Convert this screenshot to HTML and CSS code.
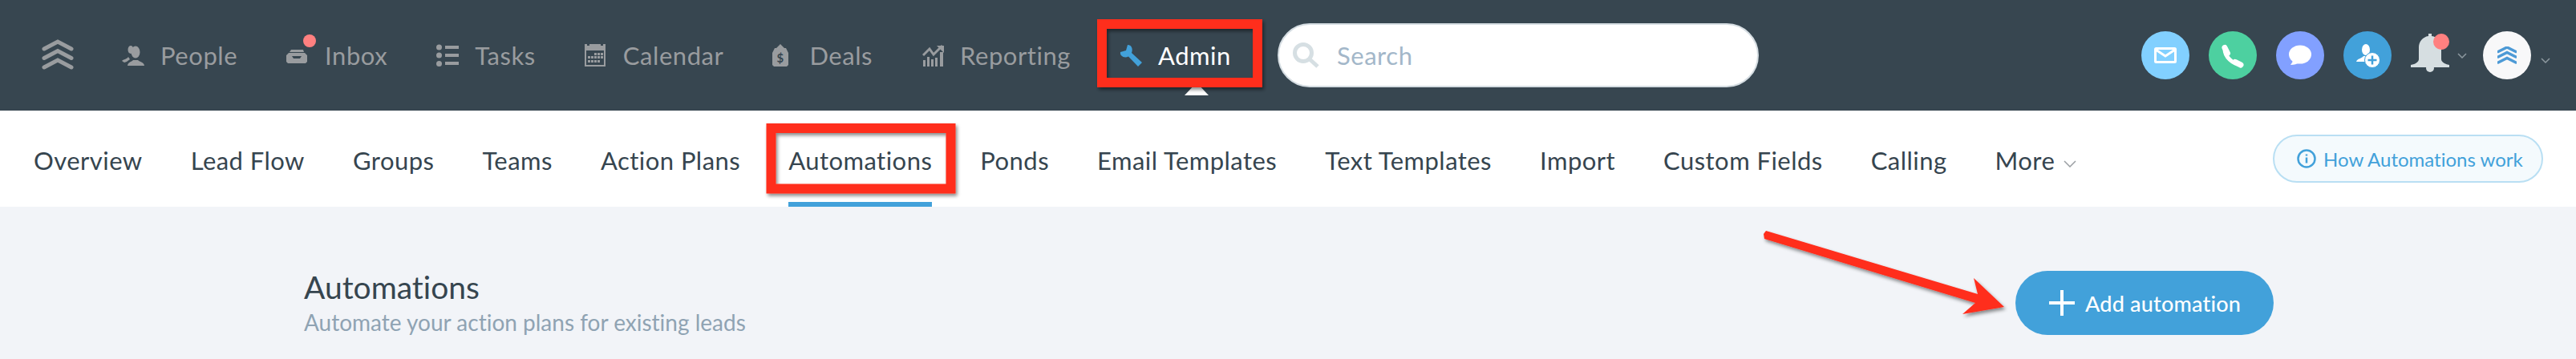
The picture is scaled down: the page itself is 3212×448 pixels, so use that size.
FILE: index.html
```html
<!DOCTYPE html>
<html lang="en">
<head>
<meta charset="utf-8">
<title>Automations</title>
<link rel="stylesheet" href="styles.css">
</head>
<body>
<header class="topbar">
  <svg class="logo" viewBox="0 0 40 38"><g class="logo-lines"><path d="M3 12 20 3 37 12"/><path d="M3 23.500 20 14.500 37 23.500"/><path d="M3 35 20 26 37 35"/></g></svg>
  <nav class="mainnav">
    <a class="navitem"><svg class="ico ico-people" viewBox="0 0 28 25"><ellipse cx="17" cy="8" rx="5.500" ry="7.500"/><ellipse cx="11" cy="5" rx="3.500" ry="5"/><path d="M7 25c0-4 5-5 7-7h6c2 2 8 3 8 7z"/><path d="M0 19c2-2 6-2 8-5l2 3-4 3-3 1z"/></svg><span>People</span></a>
    <a class="navitem"><svg class="ico ico-inbox" viewBox="0 0 26 19"><path d="M0 9 3 6h20l3 3v8l-2 2H2l-2-2zM7 10l2 3h8l2-3z" fill-rule="evenodd"/><path d="M4 5 6 2h15l1 3z M6 1h15" /></svg><i class="dot dot-inbox"></i><span>Inbox</span></a>
    <a class="navitem"><svg class="ico ico-tasks" viewBox="0 0 28 28"><circle cx="3.500" cy="4" r="3.500"/><circle cx="3.500" cy="14" r="3.500"/><circle cx="3.500" cy="24.500" r="3.500"/><path d="M11 2h17v4H11zM11 12h17v4H11zM11 22h17v4H11z"/></svg><span>Tasks</span></a>
    <a class="navitem"><svg class="ico ico-cal" viewBox="0 0 26 28"><path fill-rule="evenodd" d="M0 0h3v2h3V0h14v2h3V0h3v28H0zM2 8v18h22V8z"/><path d="M12 11h3v3h-3zM16 11h3v3h-3zM20 11h3v3h-3zM4 15h3v3H4zM8 15h3v3H8zM12 15h3v3h-3zM16 15h3v3h-3zM20 15h3v3h-3zM4 20h3v3H4zM8 20h3v3H8zM12 20h3v3h-3zM16 20h3v3h-3z"/></svg><span>Calendar</span></a>
    <a class="navitem"><svg class="ico ico-deals" viewBox="0 0 20 28"><path d="M10 0l5 5 2 0 3 6v15l-2 2H2l-2-2V11l3-6h2z"/><text x="10" y="23" class="dollar">$</text></svg><span>Deals</span></a>
    <a class="navitem"><svg class="ico ico-rep" viewBox="0 0 27 28"><path d="M1 20h3v8H1zM6 16h3v12H6zM11 19h3v9h-3zM16 17h3v11h-3zM22 10h4v18h-4z"/><path class="rep-line" d="M1 14 9 6l5 7L25 2"/><path d="M18 2h9v9z"/></svg><span>Reporting</span></a>
    <a class="navitem navitem-active"><svg class="ico ico-wrench" viewBox="0 0 28 28"><path d="M10 1 8 8 1 10C0 15 6 18 11 15.500L23 28 28 23 15 11C17 6 15 1 10 1z"/></svg><span>Admin</span></a>
    <div class="search"><svg class="search-ico" viewBox="0 0 33 32"><circle cx="13" cy="13" r="10.500"/><path d="M20 20 31 30"/></svg><span>Search</span></div>
  </nav>
  <div class="actions">
    <a class="round round-mail"><svg viewBox="0 0 60 60"><rect x="17.500" y="21.500" width="25" height="17" rx="1"/><path d="M18 23 30 31 42 23"/></svg></a>
    <a class="round round-phone"><svg viewBox="0 0 60 60"><path class="ph-arc" d="M20 22C20 32 30 41 39 41"/><path class="ph-end" d="M20 20.500l3.500 7M33 38.500l7 3.500"/></svg></a>
    <a class="round round-chat"><svg viewBox="0 0 60 60"><ellipse cx="30" cy="29" rx="14" ry="11.500"/><path d="M22 36 18 42c5 0 8-1 11-3z"/></svg></a>
    <a class="round round-add"><svg viewBox="0 0 60 60"><ellipse cx="28" cy="23" rx="5" ry="7"/><path d="M16 38c1-4 7-4 9-7h5l3 7z"/><circle cx="36" cy="36" r="9.500" class="plus-bg"/><path class="plus" d="M36 30.500v11M30.500 36h11"/></svg></a>
    <a class="bell"><svg viewBox="0 0 48 48"><path d="M22 0h4v3c7 1 12 7 12 14v15c0 3 4 6 10 7v3H0v-3c6-1 10-4 10-7V17c0-7 5-13 12-14z"/><circle cx="24" cy="43" r="5"/></svg><i class="dot dot-bell"></i></a>
    <svg class="chev chev-bell" viewBox="0 0 12 7"><path d="M1 1 6 6 11 1"/></svg>
    <a class="avatar"><svg viewBox="0 0 24 22"><g class="logo-lines logo-blue"><path d="M1 6.500 12 1l11 5.500"/><path d="M1 13 12 7.500 23 13"/><path d="M1 20 12 14.500 23 20"/></g></svg></a>
    <svg class="chev" viewBox="0 0 12 7"><path d="M1 1 6 6 11 1"/></svg>
  </div>
</header>

<nav class="tabs">
  <a class="tab">Overview</a>
  <a class="tab">Lead Flow</a>
  <a class="tab">Groups</a>
  <a class="tab">Teams</a>
  <a class="tab">Action Plans</a>
  <a class="tab tab-active">Automations</a>
  <a class="tab">Ponds</a>
  <a class="tab">Email Templates</a>
  <a class="tab">Text Templates</a>
  <a class="tab">Import</a>
  <a class="tab">Custom Fields</a>
  <a class="tab">Calling</a>
  <a class="tab tab-more">More<svg class="chev-more" viewBox="0 0 16 9"><path d="M1 1 8 8 15 1"/></svg></a>
  <a class="howto"><svg class="info" viewBox="0 0 26 26"><circle cx="13" cy="13" r="10.500"/><path class="info-i" d="M13 11.500v7M13 7.500v2"/></svg>How Automations work</a>
</nav>

<main class="content">
  <div class="heading">
    <h1>Automations</h1>
    <p>Automate your action plans for existing leads</p>
  </div>
  <button class="addbtn"><svg class="plusicon" viewBox="0 0 32 32"><path d="M16 0v32M0 16h32"/></svg>Add automation</button>
</main>

<svg class="annotations" viewBox="0 0 3212 448">
  <defs><filter id="shade" x="-5%" y="-20%" width="110%" height="140%"><feDropShadow dx="2" dy="3" stdDeviation="2" flood-color="#000" flood-opacity=".45"/></filter></defs>
  <g filter="url(#shade)" class="marks">
    <rect class="mark-box" x="1374" y="30" width="194" height="73"/>
    <rect class="mark-box" x="961.500" y="160" width="224" height="75.500"/>
    <path class="mark-arrow" d="M2202 288 L2199 292 L2200 298 L2463 378 L2447 392 L2499 383 L2461 347 L2466 367 Z"/>
  </g>
</svg>
</body>
</html>
```
FILE: styles.css
```css
* { box-sizing: border-box; }
html, body { margin: 0; padding: 0; }
body {
  position: relative;
  width: 3212px;
  height: 448px;
  overflow: hidden;
  background: #f2f4f8;
  font-family: Lato, "Open Sans", sans-serif;
  font-variant-ligatures: none;
}
a { color: inherit; text-decoration: none; }

/* top bar */
.topbar {
  display: flex;
  align-items: center;
  height: 138px;
  padding-left: 52px;
  background: #374650;
}
.logo { width: 40px; height: 38px; margin-top: -2px; flex: none; }
.logo-lines { fill: none; stroke: #999c9f; stroke-width: 5; stroke-linecap: round; }
.logo-blue { stroke: #4d9ad6; stroke-width: 3.500; }
.mainnav { display: flex; align-items: center; gap: 61px; margin-left: 60px; }
.navitem {
  position: relative;
  display: flex;
  align-items: center;
  gap: 20px;
  font-size: 31px;
  letter-spacing: .55px;
  color: #999c9f;
}
.ico { fill: #999c9f; display: block; flex: none; }
.ico-people { width: 28px; height: 25px; }
.ico-inbox { width: 26px; height: 19px; margin-right: 2px; }
.ico-tasks { width: 28px; height: 28px; }
.ico-cal { width: 26px; height: 28px; margin-right: 2px; }
.ico-deals { width: 20px; height: 28px; margin-right: 6px; }
.ico-rep { width: 27px; height: 28px; margin-left: 1px; }
.ico-wrench { width: 28px; height: 28px; fill: #42a1da; }
.dollar { fill: #374650; font-size: 15px; font-weight: 700; text-anchor: middle; }
.rep-line { fill: none; stroke: #999c9f; stroke-width: 3; }
.navitem-active { color: #fff; }
.navitem-active::after {
  content: "";
  position: absolute;
  left: 81px;
  top: 53px;
  border-left: 15px solid transparent;
  border-right: 15px solid transparent;
  border-bottom: 16px solid #fff;
}
.dot { position: absolute; border-radius: 50%; background: #ff8080; }
.dot-inbox { left: 21px; top: -7px; width: 16px; height: 16px; }

.search {
  display: flex;
  align-items: center;
  gap: 22px;
  width: 600px;
  height: 80px;
  margin-left: -3px;
  padding-left: 17px;
  border: 2px solid #d5dde2;
  border-radius: 40px;
  background: #fff;
  font-size: 31px;
  letter-spacing: .55px;
  color: #a3b7c9;
}
.search-ico { width: 33px; height: 32px; fill: none; stroke: #d6dfe3; stroke-width: 5; }

.actions { display: flex; align-items: center; gap: 24px; margin-left: auto; padding-right: 32px; }
.round { display: block; width: 60px; height: 60px; border-radius: 50%; }
.round svg { display: block; width: 60px; height: 60px; }
.round-mail { background: #82d0ff; }
.round-mail rect, .round-mail path { fill: none; stroke: #fff; stroke-width: 3; }
.round-phone { background: #4dd0a0; }
.ph-arc { fill: none; stroke: #fff; stroke-width: 5; }
.ph-end { fill: none; stroke: #fff; stroke-width: 7; stroke-linecap: round; }
.round-chat { background: #82a0ff; }
.round-chat svg { fill: #fff; }
.round-add { background: #42a1da; }
.round-add svg { fill: #fff; }
.plus { fill: none; stroke: #42a1da; stroke-width: 2.500; }
.plus-bg { stroke: #42a1da; stroke-width: 1; }
.bell { position: relative; display: block; width: 48px; height: 48px; margin-top: -6px; }
.bell svg { display: block; width: 48px; height: 48px; fill: #d6dee1; }
.dot-bell { right: 0; top: 0; width: 20px; height: 20px; }
.chev { width: 12px; height: 7px; margin-left: -12px; margin-top: 12px; fill: none; stroke: #8c989f; stroke-width: 1.500; }
.chev-bell { margin-right: -4px; margin-left: -14px; margin-top: 1px; }
.avatar {
  display: flex;
  align-items: center;
  justify-content: center;
  width: 60px;
  height: 60px;
  border-radius: 50%;
  background: #f8f8f9;
}
.avatar svg { width: 24px; height: 22px; filter: blur(.5px); }

/* tab bar */
.tabs {
  display: flex;
  align-items: stretch;
  gap: 60px;
  height: 120px;
  padding-left: 42px;
  background: #fff;
  font-size: 31px;
  letter-spacing: .46px;
  color: #36454f;
}
.tab {
  display: flex;
  align-items: center;
  padding-top: 9px;
  border-bottom: 6px solid transparent;
}
.tab-active { border-bottom-color: #42a1da; }
.chev-more { width: 16px; height: 9px; margin: 10px 0 0 11px; fill: none; stroke: #9a9fa3; stroke-width: 1.500; }
.howto {
  display: flex;
  align-items: center;
  gap: 8px;
  align-self: center;
  width: 337px;
  height: 60px;
  margin-left: auto;
  margin-right: 41px;
  padding-left: 27px;
  border: 2px solid #b9dff3;
  border-radius: 30px;
  background: #f4fafd;
  font-size: 24px;
  letter-spacing: 0;
  color: #42a1da;
}
.info { width: 26px; height: 26px; fill: none; stroke: #42a1da; stroke-width: 2.500; }

/* content */
.content {
  display: flex;
  justify-content: space-between;
  align-items: flex-start;
  padding: 80px 377px 0 379px;
}
.heading h1 { margin: -3px 0 0; font-size: 39px; font-weight: 400; line-height: 46px; color: #36454f; }
.heading p { margin: 4px 0 0; font-size: 28px; letter-spacing: 0; line-height: 34px; color: #8fa3b3; }
.addbtn {
  display: flex;
  align-items: center;
  gap: 13px;
  height: 80px;
  width: 322px;
  padding: 0 0 0 42px;
  border: 0;
  border-radius: 40px;
  background: #42a1da;
  font: 500 27px Lato, sans-serif;
  letter-spacing: .2px;
  color: #fff;
}
.plusicon { width: 32px; height: 32px; fill: none; stroke: #fff; stroke-width: 4; flex: none; }

/* annotations drawn over the screenshot */
.annotations { position: absolute; left: 0; top: 0; width: 3212px; height: 448px; pointer-events: none; }
.mark-box { fill: none; stroke: #ff2d1c; stroke-width: 12; }
.mark-arrow { fill: #ff2d1c; }
```
